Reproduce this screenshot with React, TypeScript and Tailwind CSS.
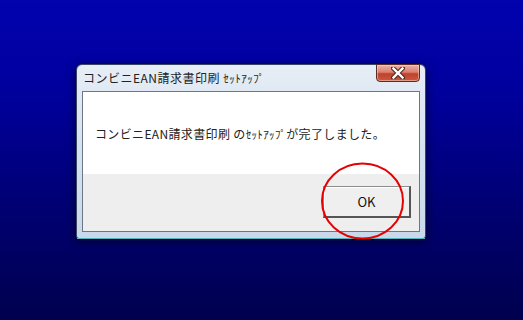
import React from "react";

export default function App() {
  return (
    <div
      className="relative w-[523px] h-[320px] overflow-hidden bg-[linear-gradient(to_bottom,#0202ae_0%,#00009c_30%,#000072_65%,#00004e_100%)] pt-[64px] pl-[76px]"
      style={{ fontFamily: '"Noto Sans CJK JP", "Noto Sans", sans-serif' }}
    >
      {/* Window */}
      <div className="relative w-[350px] h-[175px] rounded-t-[6px] rounded-b-[3px] border border-[#3a4660] bg-[linear-gradient(to_bottom,#e6edf6_0%,#d8e4f0_40%,#c9d9ea_100%)] shadow-[0_2px_10px_rgba(0,0,0,0.6)] flex flex-col">
        {/* Title bar */}
        <div className="h-[26px] flex items-start justify-between pl-[6px] pr-[5px]">
          <div className="pt-[5px] text-[12px] leading-[16px] text-[#222] tracking-[0.5px] whitespace-nowrap">
            コンビニEAN請求書印刷 <span className="text-[11px]">ｾｯﾄｱｯﾌﾟ</span>
          </div>
          <div className="-mt-px w-[44px] h-[18px] rounded-b-[4px] border border-[#5a2a24] bg-[linear-gradient(to_bottom,#e8b2a6_0%,#d98070_45%,#c0402e_55%,#c85a40_100%)] flex items-center justify-center shadow-[inset_0_0_0_1px_rgba(255,220,210,0.5)]">
            <svg width="14" height="12" viewBox="0 0 14 12">
              <path d="M2 1 L12 11 M12 1 L2 11" stroke="#5a2a24" strokeWidth="4.5" strokeLinecap="square" />
              <path d="M2.5 1.5 L11.5 10.5 M11.5 1.5 L2.5 10.5" stroke="#ffffff" strokeWidth="2.4" strokeLinecap="square" />
            </svg>
          </div>
        </div>
        {/* Client area */}
        <div className="mx-[5px] mb-[6px] flex-1 border border-[#6c7686] flex flex-col">
          <div className="h-[82px] bg-white pl-[12px] pt-[34px]">
            <div className="text-[12px] leading-[16px] text-[#222] whitespace-nowrap tracking-[0.35px]">
              コンビニEAN請求書印刷 の<span className="text-[11px]">ｾｯﾄｱｯﾌﾟ</span>が完了しました。
            </div>
          </div>
          <div className="flex-1 bg-[#eeeeee] flex items-end justify-end pr-[8px] pb-[13px]">
            <div className="w-[88px] h-[32px] border-t border-l border-[#8c8c8c] border-r-2 border-b-2 border-r-[#555555] border-b-[#555555] bg-[#efefef] flex items-center justify-center text-[13px] text-[#111] shadow-[inset_1px_1px_0_#ffffff]">
              OK
            </div>
          </div>
        </div>
        <div className="absolute left-0 right-0 bottom-[-1px] h-px bg-[#4fb7c4]" />
      </div>

      {/* Red annotation ellipse */}
      <svg className="absolute left-[320px] top-[162px]" width="86" height="79" viewBox="0 0 86 79">
        <ellipse cx="42.5" cy="39" rx="40.5" ry="37.5" fill="none" stroke="#e60000" strokeWidth="2" />
      </svg>
    </div>
  );
}
